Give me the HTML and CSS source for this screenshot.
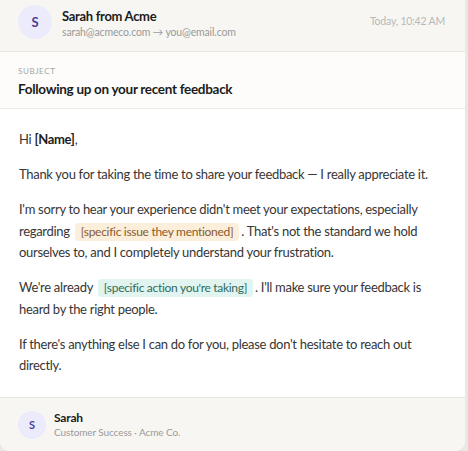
FILE: index.html
```html
<!DOCTYPE html>
<html>
<head>
<meta charset="utf-8">
<link rel="stylesheet" href="styles.css">
</head>
<body>
<div class="card">
  <header class="head">
    <div class="avatar">S</div>
    <div class="from">
      <div class="name">Sarah from Acme</div>
      <div class="addr">sarah@acmeco.com → you@email.com</div>
    </div>
    <div class="time">Today, 10:42 AM</div>
  </header>
  <section class="subject">
    <div class="label">SUBJECT</div>
    <div class="title">Following up on your recent feedback</div>
  </section>
  <section class="body">
    <p>Hi <b>[Name]</b>,</p>
    <p>Thank you for taking the time to share your feedback — I really appreciate it.</p>
    <p>I'm sorry to hear your experience didn't meet your expectations, especially regarding <span class="ph warm">[specific issue they mentioned]</span>. That's not the standard we hold ourselves to, and I completely understand your frustration.</p>
    <p>We're already <span class="ph cool">[specific action you're taking]</span>. I'll make sure your feedback is heard by the right people.</p>
    <p>If there's anything else I can do for you, please don't hesitate to reach out directly.</p>
  </section>
  <footer class="foot">
    <div class="avatar small">S</div>
    <div class="sig">
      <div class="sname">Sarah</div>
      <div class="role">Customer Success · Acme Co.</div>
    </div>
  </footer>
</div>
</body>
</html>
```
FILE: styles.css
```css
html, body {
  margin: 0;
  padding: 0;
  background: #e9e8e5;
}
body {
  font-family: Lato, "Noto Sans", sans-serif;
  color: #333;
}
.card {
  width: 465px;
  height: 451px;
  background: #fff;
  border-radius: 0 0 10px 10px;
  overflow: hidden;
  display: flex;
  flex-direction: column;
}
.head {
  display: flex;
  align-items: flex-start;
  background: #f7f6f3;
  padding: 5px 20px 12px 18px;
  border-bottom: 1px solid #e9e6df;
  gap: 10px;
}
.avatar {
  width: 34px;
  height: 34px;
  border-radius: 50%;
  background: #ecebfb;
  color: #4b3f96;
  font-size: 13px;
  font-weight: 700;
  display: flex;
  align-items: center;
  justify-content: center;
  flex: none;
}
.from { flex: 1; padding-top: 2px; }
.name {
  font-size: 13px;
  font-weight: 700;
  letter-spacing: -0.3px;
  color: #1c1c1c;
  line-height: 18px;
}
.addr {
  font-size: 10.5px;
  letter-spacing: -0.15px;
  color: #9a9a9a;
  line-height: 14px;
}
.time {
  font-size: 10.5px;
  letter-spacing: -0.2px;
  color: #b8b8b8;
  padding-top: 10px;
}
.subject {
  background: #fdfcfa;
  padding: 13px 18px 9px;
  border-bottom: 1px solid #eceae4;
}
.label {
  font-size: 8px;
  letter-spacing: 0.6px;
  color: #a5a5a5;
  line-height: 12px;
}
.title {
  font-size: 13.5px;
  font-weight: 700;
  letter-spacing: -0.3px;
  color: #1c1c1c;
  line-height: 20px;
  margin-top: 2px;
}
.body {
  flex: 1;
  padding: 20px 20px 0 19px;
  font-size: 13px;
  letter-spacing: -0.3px;
  line-height: 21.5px;
  color: #363636;
}
.body p { margin: 0 0 13.5px; }
.body p:last-child { margin-bottom: 0; }
.body b { font-weight: 700; color: #1c1c1c; }
.ph {
  display: inline-block;
  font-size: 12px;
  line-height: 16px;
  letter-spacing: -0.3px;
  padding: 1px 6px;
  border-radius: 4px;
  margin: 0 2px;
}
.warm { background: #fbeedb; color: #8a5a2c; }
.cool { background: #e2f4ef; color: #2d6b5c; }
.foot {
  display: flex;
  align-items: center;
  gap: 8px;
  background: #f7f6f3;
  border-top: 1px solid #e9e6df;
  padding: 12px 18px 12px;
}
.avatar.small {
  width: 28px;
  height: 28px;
  font-size: 11px;
}
.sname {
  font-size: 12px;
  font-weight: 700;
  letter-spacing: -0.2px;
  color: #1c1c1c;
  line-height: 15px;
}
.role {
  font-size: 10px;
  letter-spacing: -0.1px;
  color: #9a9a9a;
  line-height: 14px;
}
```
